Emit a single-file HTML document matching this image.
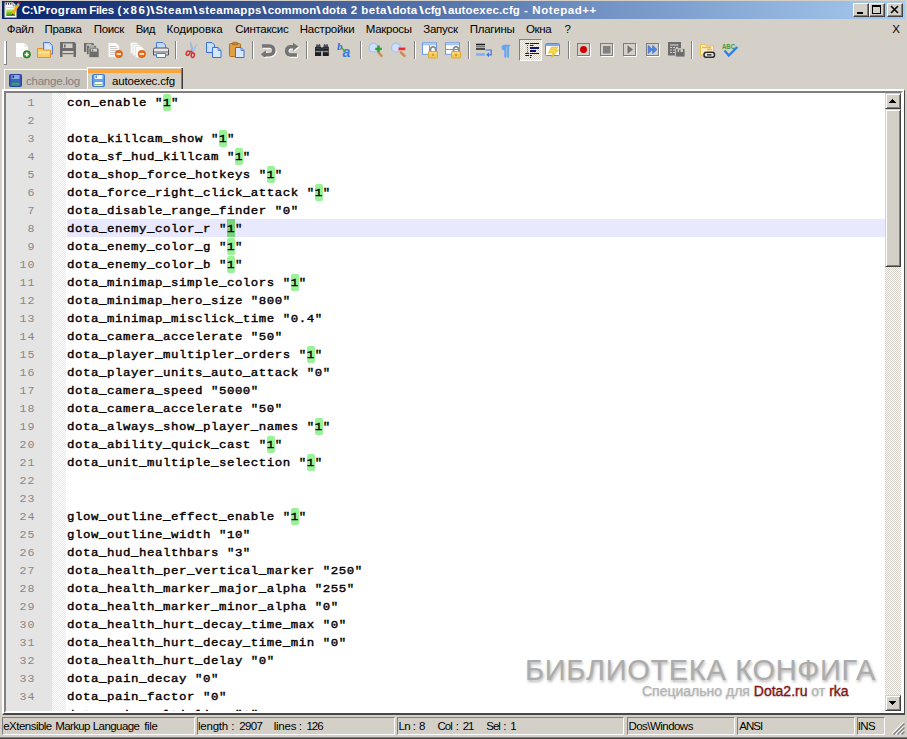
<!DOCTYPE html>
<html><head><meta charset="utf-8"><title>autoexec.cfg - Notepad++</title>
<style>
*{box-sizing:border-box;margin:0;padding:0}
html,body{width:907px;height:739px;overflow:hidden;background:#d4d0c8;font-family:"Liberation Sans",sans-serif;}
body{position:relative}
.abs{position:absolute}
#title{position:absolute;left:2px;top:1px;width:903px;height:18px;background:linear-gradient(90deg,#0a246a 0%,#a6caf0 100%);}
#title .t{position:absolute;left:0;top:2px;font-weight:bold;font-size:11.5px;line-height:14px;color:#fff;white-space:pre}
.sg{position:absolute;top:0;white-space:pre}
.wb{position:absolute;top:2px;width:16px;height:14px;background:#d4d0c8;border:1px solid;border-color:#fff #404040 #404040 #fff;box-shadow:inset -1px -1px 0 #808080;}
#menu{position:absolute;left:0;top:20px;width:907px;height:19px;font-size:11.5px;line-height:19px;color:#000}
.mi{position:absolute;top:0;white-space:pre}
#tb{position:absolute;left:0;top:39px;width:907px;height:28px}
.grip{position:absolute;left:4px;top:41px;width:3px;height:24px;background:#fff;border-right:1px solid #808080;border-bottom:1px solid #808080}
.sep{position:absolute;top:41px;width:2px;height:18px;border-left:1px solid #808080;border-right:1px solid #fff}
.ic{position:absolute;top:42px;width:16px;height:16px;overflow:visible}
.pressed{position:absolute;top:39px;width:23px;height:22px;border:1px solid;border-color:#808080 #fff #fff #808080;background:repeating-conic-gradient(#fff 0 25%,#d4d0c8 0 50%) 0 0/2px 2px}
#tab1{position:absolute;left:4px;top:69px;width:83px;height:20px;background:#cac6be;border-left:1px solid #fff;border-top:1px solid #fff;}
#tab2{position:absolute;left:87px;top:67px;width:96px;height:22px;background:#d4d0c8;border-left:1px solid #fff;border-top:1px solid #fff}
#tab2:before{content:"";position:absolute;left:0;top:1px;right:2px;height:4px;background:#faa53c}
#tab2:after{content:"";position:absolute;right:0;top:0;bottom:0;width:2px;background:linear-gradient(90deg,#808080 50%,#404040 50%)}
#tabtx{position:absolute;left:0;top:74px;font-size:11.5px;line-height:14px;color:#000}
#edo{position:absolute;left:2px;top:89px;width:903px;height:626px;border:solid;border-width:2px 1px 2px 2px;border-color:#fff #484848 #484848 #fff}
#edo:after{content:"";position:absolute;right:0;top:0;bottom:0;width:1px;background:#fff}
#ed{position:absolute;left:4px;top:91px;width:899px;height:622px;background:#fff;border:2px solid;border-color:#808080 #fff #fff #808080;overflow:hidden}
#ed:before{content:"";position:absolute;left:-1px;top:-1px;right:-1px;bottom:-1px;border:1px solid;border-color:#404040 #d4d0c8 #d4d0c8 #404040;z-index:5;pointer-events:none}
#edin{position:absolute;left:0;top:0;width:895px;height:618px;overflow:hidden;background:#fff}
#nm{position:absolute;left:0;top:0;width:46px;height:100%;background:#e4e4e4}
#fm{position:absolute;left:46px;top:0;width:14px;height:100%;background:repeating-conic-gradient(#fff 0 25%,#e9e9e9 0 50%) 0 0/2px 2px}
.ln{position:relative;height:18px;width:879px;white-space:pre}
.no{position:absolute;left:0;top:2px;width:29.6px;text-align:right;font:11.6px/16px "Liberation Mono",monospace;letter-spacing:1.04px;color:#878787}
.tx{position:absolute;left:61px;top:0;right:0;height:18px;padding-top:2px;font:normal 12.4px/16px "Liberation Mono",monospace;letter-spacing:0.5586px;color:#000;-webkit-text-stroke:0.42px #000;transform:scaleY(.89);transform-origin:0 13px}
.cl{position:absolute;left:61px;top:0;right:0;height:18px;background:#e8e8ff}
.hb{position:absolute;width:8px}
.hl{top:1px;height:17px;background:#98f298;border-radius:2px}
.sel{top:0;height:18px;background:#78d478}
#sb{position:absolute;left:879px;top:0;width:16px;height:100%;background:repeating-conic-gradient(#fff 0 25%,#d4d0c8 0 50%) 0 0/2px 2px}
.btn{position:absolute;left:0;width:16px;background:#d4d0c8;border:1px solid;border-color:#d4d0c8 #404040 #404040 #d4d0c8;box-shadow:inset 1px 1px 0 #fff, inset -1px -1px 0 #808080}
.arr{position:absolute;left:3px;width:0;height:0;border-left:4px solid transparent;border-right:4px solid transparent}
#status{position:absolute;left:0;top:717px;width:907px;height:18px}
#stx{position:absolute;left:0;top:0;font-size:11.5px;line-height:18px;color:#000}
.sf{position:absolute;top:0;height:18px;border:1px solid;border-color:#808080 #fff #fff #808080}
#wm1{position:absolute;left:519px;top:559px;font-size:29px;line-height:36px;color:#acacac;white-space:pre;text-shadow:1px 2px 3px rgba(0,0,0,.3);letter-spacing:0.68px}
#wm2{position:absolute;left:636px;top:590px;font-size:14px;line-height:16px;color:#b4b4b4;white-space:pre;text-shadow:0 1px 2px rgba(0,0,0,.22);-webkit-text-stroke:.2px #b4b4b4}
#wm2 b{font-weight:normal;color:#7e1414;-webkit-text-stroke:.3px #7e1414}
</style></head><body>
<div id="title">
<svg class="abs" style="left:1px;top:0px" width="19" height="18" viewBox="0 0 19 18"><defs><linearGradient id="gg" x1="0" y1="0" x2="0" y2="1"><stop offset="0" stop-color="#d4f470"/><stop offset=".75" stop-color="#58b018"/><stop offset="1" stop-color="#1c6008"/></linearGradient></defs><path d="M1.800 1.600h8.200l3.300 3.300v11.600h-11.500z" fill="#fff" stroke="#a0a0a0" stroke-width="1"/><path d="M10 1.600v3.300h3.300" fill="#f0f0f0" stroke="#707070" stroke-width=".9"/><rect x="3.300" y="8.200" width="8.600" height="6.600" fill="url(#gg)"/><path d="M3.300 6.300h8.600" stroke="#c8ccd0" stroke-width="1"/><path d="M3.200 2v1.700M5.500 2v1.700M7.700 2v1.700" stroke="#283060" stroke-width="1.200"/><path d="M15.600 3.200L9 13.500" stroke="#f8b008" stroke-width="2.600"/><path d="M9.700 12.300L8.200 14.600l2.500-.9z" fill="#403010"/><path d="M15 3.800l1-1.500" stroke="#a8c0e0" stroke-width="2"/><rect x="15.500" y=".800" width="2" height="2" fill="#c81010"/></svg>
<div class="t" id="tt"><span class="sg" style="left:19.85px;letter-spacing:-0.400px">C:</span><span class="sg" style="left:31.20px;letter-spacing:0.000px;transform-origin:0.10px 50%;transform:scaleX(1.467)">\</span><span class="sg" style="left:35.75px;letter-spacing:0.308px">Program</span> <span class="sg" style="left:87.25px;letter-spacing:-0.350px">Files</span> <span class="sg" style="left:115.45px;letter-spacing:1.462px">(x86)</span><span class="sg" style="left:148.20px;letter-spacing:0.000px;transform-origin:0.10px 50%;transform:scaleX(1.467)">\</span><span class="sg" style="left:153.40px;letter-spacing:0.563px">Steam</span><span class="sg" style="left:191.20px;letter-spacing:0.000px;transform-origin:0.10px 50%;transform:scaleX(1.467)">\</span><span class="sg" style="left:196.50px;letter-spacing:0.356px">steamapps</span><span class="sg" style="left:259.90px;letter-spacing:0.000px;transform-origin:0.10px 50%;transform:scaleX(1.500)">\</span><span class="sg" style="left:265.70px;letter-spacing:0.110px">common</span><span class="sg" style="left:314.40px;letter-spacing:0.000px;transform-origin:0.10px 50%;transform:scaleX(1.500)">\</span><span class="sg" style="left:319.95px;letter-spacing:0.117px">dota</span> <span class="sg" style="left:348.65px;letter-spacing:0.000px">2</span> <span class="sg" style="left:359.25px;letter-spacing:0.500px">beta</span><span class="sg" style="left:385.40px;letter-spacing:0.000px;transform-origin:0.10px 50%;transform:scaleX(1.500)">\</span><span class="sg" style="left:390.45px;letter-spacing:0.117px">dota</span><span class="sg" style="left:416.70px;letter-spacing:0.000px;transform-origin:0.10px 50%;transform:scaleX(1.533)">\</span><span class="sg" style="left:422.50px;letter-spacing:-0.225px">cfg</span><span class="sg" style="left:439.90px;letter-spacing:0.000px;transform-origin:0.10px 50%;transform:scaleX(1.500)">\</span><span class="sg" style="left:445.90px;letter-spacing:0.155px">autoexec.cfg</span> <span class="sg" style="left:521.90px;letter-spacing:0.000px">-</span> <span class="sg" style="left:530.35px;letter-spacing:0.562px">Notepad++</span></div>
<div class="wb" style="left:851px"><i class="abs" style="left:3px;top:8px;width:6px;height:2px;background:#000"></i></div>
<div class="wb" style="left:867px"><i class="abs" style="left:2px;top:1px;width:9px;height:9px;border:1px solid #000;border-top-width:2px"></i></div>
<div class="wb" style="left:885px"><svg class="abs" style="left:2px;top:1px" width="10" height="9" viewBox="0 0 10 9"><path d="M1 1l7 7M8 1L1 8" stroke="#000" stroke-width="1.6"/></svg></div>
</div>
<div id="menu"><span class="mi" style="left:6.75px;letter-spacing:-0.350px">Файл</span> <span class="mi" style="left:44.40px;letter-spacing:-0.250px">Правка</span> <span class="mi" style="left:93.80px;letter-spacing:-0.363px">Поиск</span> <span class="mi" style="left:135.80px;letter-spacing:-0.625px">Вид</span> <span class="mi" style="left:166.50px;letter-spacing:-0.056px">Кодировка</span> <span class="mi" style="left:235.25px;letter-spacing:-0.281px">Синтаксис</span> <span class="mi" style="left:299.70px;letter-spacing:-0.188px">Настройки</span> <span class="mi" style="left:365.80px;letter-spacing:-0.283px">Макросы</span> <span class="mi" style="left:423.15px;letter-spacing:-0.200px">Запуск</span> <span class="mi" style="left:469.70px;letter-spacing:-0.242px">Плагины</span> <span class="mi" style="left:526.00px;letter-spacing:-0.350px">Окна</span> <span class="mi" style="left:564.45px;letter-spacing:0.000px">?</span> <span class="mi" style="left:892.25px;letter-spacing:0.000px">X</span></div>
<div class="grip"></div>
<svg class="ic" style="left:15px" width="16" height="16" viewBox="0 0 16 16"><path d="M1 1h8.500l3.500 3.500v10.500h-12z" fill="#fefefe"/><path d="M9.500 1v3.500h3.500" fill="#f0f0f0" stroke="#e4e4e4" stroke-width=".5"/><circle cx="11.800" cy="12.400" r="3.800" fill="#3a9a30"/><circle cx="11.800" cy="12.400" r="3.500" fill="none" stroke="#1e6a1a" stroke-width=".8"/><path d="M9.600 12.400h4.400M11.800 10.200v4.400" stroke="#fff" stroke-width="1.500"/></svg>
<svg class="ic" style="left:37px" width="16" height="16" viewBox="0 0 16 16"><path d="M6.5 .5h6l3 3v8.500h-9z" fill="#bcd4f8" stroke="#4a80d8" stroke-width="1"/><path d="M8 2h4v2h2v6h-6z" fill="#dce8fc"/><path d="M.5 6.500h5l1 1.500h7v7.500h-13z" fill="#f8cf6a" stroke="#e8902a" stroke-width="1"/><path d="M1.500 9.500h11v2h-11z" fill="#fbe39a"/></svg>
<svg class="ic" style="left:60px" width="16" height="16" viewBox="0 0 16 16"><path d="M0 0h14.500l1.500 1.500v13.500h-16z" fill="#6c6c6c"/><rect x="3" y="1.500" width="9.500" height="4.500" fill="#d4d0c8"/><rect x="4" y="2.500" width="1.600" height="3" fill="#6c6c6c"/><rect x="2.500" y="9" width="11" height="6" fill="#d4d0c8"/><rect x="2.500" y="11" width="11" height="1.200" fill="#6c6c6c"/></svg>
<svg class="ic" style="left:83px" width="16" height="16" viewBox="0 0 16 16"><path d="M1 1h9v3h-9z M1 1h9l1 1v8h-10z" fill="#6c6c6c"/><path d="M3.500 3.500h9l1 1v8h-10z" fill="#6c6c6c" stroke="#d4d0c8" stroke-width=".7"/><path d="M6 6h9l1 1v8.500h-10z" fill="#6c6c6c" stroke="#d4d0c8" stroke-width=".7"/><rect x="3.500" y="1.800" width="5" height="1" fill="#d4d0c8"/><rect x="6" y="4.300" width="5" height="1" fill="#d4d0c8"/><rect x="8" y="7" width="6" height="2.600" fill="#d4d0c8"/><rect x="9" y="7.600" width="1.200" height="2" fill="#6c6c6c"/></svg>
<svg class="ic" style="left:107px" width="16" height="16" viewBox="0 0 16 16"><path d="M1.500 1h7.500l3 3v11h-10.500z" fill="#fcfcfc" stroke="#e4e2dc" stroke-width=".6"/><path d="M3 4.500h6M3 6.500h7.500M3 8.500h7.500M3 10.500h5M3 12.500h4" stroke="#c8c8c8" stroke-width="1"/><circle cx="11.800" cy="12" r="3.700" fill="#ee6a10"/><circle cx="11.800" cy="12" r="3.700" fill="none" stroke="#c8500a" stroke-width=".6"/><path d="M9.600 12h4.400" stroke="#fff" stroke-width="1.600"/></svg>
<svg class="ic" style="left:130px" width="16" height="16" viewBox="0 0 16 16"><path d="M.500 .500h6l2 2v9h-8z" fill="#fafafa" stroke="#dcdad4" stroke-width=".6"/><path d="M3 2.500h6l2 2v9h-8z" fill="#fafafa" stroke="#dcdad4" stroke-width=".6"/><path d="M5.500 4.500h6l2.500 2.500v8.500h-8.500z" fill="#fcfcfc" stroke="#dcdad4" stroke-width=".6"/><circle cx="11.800" cy="12" r="3.700" fill="#ee6a10"/><circle cx="11.800" cy="12" r="3.700" fill="none" stroke="#c8500a" stroke-width=".6"/><path d="M9.600 12h4.400" stroke="#fff" stroke-width="1.600"/></svg>
<svg class="ic" style="left:153px" width="16" height="16" viewBox="0 0 16 16"><path d="M3.500 .500h6.500l2.500 2.500v5h-9z" fill="#c4daf8" stroke="#4a80d8" stroke-width="1"/><path d="M.500 7.500q0-1.500 1.500-1.500h12q1.500 0 1.500 1.500v5.500h-15z" fill="#e8e8e8" stroke="#505458" stroke-width="1"/><rect x="1" y="9" width="14" height="2.200" fill="#a0a4a8"/><path d="M3.500 11.500h9v4h-9z" fill="#f4f8ff" stroke="#4a80d8" stroke-width="1"/></svg>
<div class="sep" style="left:175px"></div>
<svg class="ic" style="left:183px" width="16" height="16" viewBox="0 0 16 16"><path d="M7.600 .500L8.800 10.500L9.600 6z" fill="#a8ccf0" stroke="#88b0e0" stroke-width=".8"/><path d="M13.600 2.500L8.300 11L10.800 9z" fill="#cfe4fa" stroke="#90b8e4" stroke-width=".8"/><ellipse cx="5" cy="11.200" rx="1.700" ry="2.300" fill="none" stroke="#d83030" stroke-width="1.500" transform="rotate(40 5 11.200)"/><ellipse cx="9.800" cy="13.200" rx="1.600" ry="2.300" fill="none" stroke="#d83030" stroke-width="1.500" transform="rotate(10 9.800 13.200)"/><path d="M6.500 9.800L8.500 9.300L9.500 10.800" stroke="#d83030" stroke-width="1.300" fill="none"/></svg>
<svg class="ic" style="left:206px" width="16" height="16" viewBox="0 0 16 16"><path d="M.500 .500h5.500l2.500 2.500v7.500h-8z" fill="#c8dcf8" stroke="#3a70d0" stroke-width="1"/><path d="M6.500 5.500h5.500l3 3v7h-8.500z" fill="#d8e6fc" stroke="#3a70d0" stroke-width="1"/><path d="M12 5.500v3h3" fill="none" stroke="#3a70d0" stroke-width=".8"/></svg>
<svg class="ic" style="left:229px" width="16" height="16" viewBox="0 0 16 16"><rect x=".500" y="1.500" width="11" height="13" rx="1" fill="#e0a048" stroke="#b07020" stroke-width="1"/><rect x="3.500" y=".300" width="5" height="2.500" rx=".8" fill="#c88830" stroke="#905810" stroke-width=".6"/><path d="M6.500 5.500h5.500l3 3v7h-8.500z" fill="#d8e6fc" stroke="#3a70d0" stroke-width="1"/><path d="M12 5.500v3h3" fill="none" stroke="#3a70d0" stroke-width=".8"/></svg>
<div class="sep" style="left:252px"></div>
<svg class="ic" style="left:260px" width="16" height="16" viewBox="0 0 16 16"><g transform="translate(1 1)"><path d="M2 4H9.500A4.200 4.200 0 0 1 9.500 12.700H5" fill="none" stroke="#fff" stroke-width="3.600"/><path d="M6 8.300L.800 12.300L4.200 15.200L6 14.500z" fill="#fff"/></g><path d="M2 4H9.500A4.200 4.200 0 0 1 9.500 12.700H5" fill="none" stroke="#747474" stroke-width="3.600"/><path d="M6 8.300L.800 12.300L4.200 15.200L6 14.500z" fill="#747474"/></svg>
<svg class="ic" style="left:283px" width="16" height="16" viewBox="0 0 16 16"><g transform="translate(1 1)"><path d="M14 13H7A4.200 4.200 0 0 1 7 4.800H10.500" fill="none" stroke="#fff" stroke-width="3.600"/><path d="M10 .800L15.500 4.600L10 8.800z" fill="#fff"/></g><path d="M14 13H7A4.200 4.200 0 0 1 7 4.800H10.500" fill="none" stroke="#747474" stroke-width="3.600"/><path d="M10 .800L15.500 4.600L10 8.800z" fill="#747474"/></svg>
<div class="sep" style="left:306px"></div>
<svg class="ic" style="left:314px" width="16" height="16" viewBox="0 0 16 16"><path d="M2.500 2h3.500l.800 3h-5zM10 2h3.500l1 3h-5.200z" fill="#4a4e54"/><path d="M1 5h6.200v9h-6.200zM8.800 5h6v9h-6z" fill="#1c1e22"/><rect x="6.500" y="5.500" width="3" height="3.500" fill="#2c3036"/><path d="M1.500 9.500h5.200M9.300 9.500h5" stroke="#8a8e94" stroke-width="1.600"/><path d="M3.300 2.600h1.800M10.800 2.600h1.800" stroke="#b0b4b8" stroke-width="1"/><path d="M1.500 6.200h5M9.300 6.200h5" stroke="#50545a" stroke-width="1"/></svg>
<svg class="ic" style="left:337px" width="16" height="16" viewBox="0 0 16 16"><text x="0" y="7.500" font-family="Liberation Serif,serif" font-style="italic" font-weight="bold" font-size="11" fill="#2a6ae0">b</text><text x="5.500" y="15.300" font-family="Liberation Sans,sans-serif" font-style="italic" font-weight="bold" font-size="14" fill="#3a7ae8">a</text><path d="M4.500 6l3.500 3" stroke="#3aa83a" stroke-width="1.400" fill="none"/><path d="M8.800 6.800v3.200h-3.200z" fill="#3aa83a"/></svg>
<div class="sep" style="left:360px"></div>
<svg class="ic" style="left:368px" width="16" height="16" viewBox="0 0 16 16"><path d="M10.500 10.500l3 3.300" stroke="#c89058" stroke-width="2.600" stroke-linecap="round"/><circle cx="5.400" cy="5.700" r="4.400" fill="#d0e0f8" stroke="#a8c4ec" stroke-width="1.400"/><path d="M7.200 6.900h6.600M10.500 3.600v6.600" stroke="#2ea02e" stroke-width="2.400"/></svg>
<svg class="ic" style="left:391px" width="16" height="16" viewBox="0 0 16 16"><path d="M10 10.500l3.500 3.300" stroke="#c89058" stroke-width="2.600" stroke-linecap="round"/><circle cx="4.900" cy="5.700" r="4.400" fill="#d0e0f8" stroke="#a8c4ec" stroke-width="1.400"/><rect x="7.600" y="5.600" width="6.600" height="2.500" fill="#e82828" stroke="#f08080" stroke-width=".5"/></svg>
<div class="sep" style="left:414px"></div>
<svg class="ic" style="left:422px" width="16" height="16" viewBox="0 0 16 16"><rect x=".500" y=".800" width="14" height="11.500" fill="#fff" stroke="#6a98e4" stroke-width="1"/><rect x="1" y="1.300" width="13" height="2" fill="#a4c4f4"/><path d="M7.500 3.300v9" stroke="#6a98e4" stroke-width="1"/><path d="M8.500 9.500v-2a2.600 2.600 0 0 1 5.200 0v2" fill="none" stroke="#8c8c8c" stroke-width="1.800"/><rect x="6.500" y="9.500" width="9" height="6.500" rx=".6" fill="#f4c850" stroke="#d8a020" stroke-width=".8"/><rect x="7.500" y="10.500" width="7" height="1.500" fill="#fbe08c"/><rect x="10.300" y="11.500" width="1.500" height="2.500" fill="#c89020"/></svg>
<svg class="ic" style="left:445px" width="16" height="16" viewBox="0 0 16 16"><rect x=".500" y=".800" width="14" height="11.500" fill="#fff" stroke="#6a98e4" stroke-width="1"/><rect x="1" y="1.300" width="13" height="2" fill="#a4c4f4"/><path d="M.500 7.500h14" stroke="#6a98e4" stroke-width="1"/><path d="M8.500 9.500v-2a2.600 2.600 0 0 1 5.200 0v2" fill="none" stroke="#8c8c8c" stroke-width="1.800"/><rect x="6.500" y="9.500" width="9" height="6.500" rx=".6" fill="#f4c850" stroke="#d8a020" stroke-width=".8"/><rect x="7.500" y="10.500" width="7" height="1.500" fill="#fbe08c"/><rect x="10.300" y="11.500" width="1.500" height="2.500" fill="#c89020"/></svg>
<div class="sep" style="left:468px"></div>
<svg class="ic" style="left:476px" width="16" height="16" viewBox="0 0 16 16"><path d="M0 2.500h9M0 7h9" stroke="#181818" stroke-width="1.300"/><path d="M0 4.700h9" stroke="#707070" stroke-width="1.300"/><rect x="0" y="11.300" width="9" height="2.400" fill="#7ab0f0"/><path d="M9.500 8h5.700v4.800h-3" stroke="#3a78e0" stroke-width="1.200" fill="none"/><path d="M13 10.300l-2.800 2.500l2.800 2.500z" fill="#3a78e0"/></svg>
<svg class="ic" style="left:499px" width="16" height="16" viewBox="0 0 16 16"><text x="2.200" y="12.500" font-family="Liberation Sans,sans-serif" font-weight="bold" font-size="15.500" fill="#62a4f2" stroke="#62a4f2" stroke-width=".7">¶</text></svg>
<div class="pressed" style="left:519px"></div>
<svg class="ic" style="left:522px" width="16" height="16" viewBox="0 0 16 16"><path d="M3.200 1.500h3.800M8 1.500h9M8 3.500h3.500M3.200 11.500h3.800M8 11.500h9M3.200 13.500h3.800M8 13.500h2M8 15.500h1.200" stroke="#0c1470" stroke-width="1.200"/><path d="M8 6h9M8 9h6" stroke="#0c1470" stroke-width="2"/><path d="M5.500 3v7.500" stroke="#f01010" stroke-width="1.200" stroke-dasharray="1.100 1"/></svg>
<svg class="ic" style="left:545px" width="16" height="16" viewBox="0 0 16 16"><rect x=".500" y="1.500" width="14" height="12" rx="1" fill="#fff" stroke="#5a8ae0" stroke-width="1"/><rect x="1" y="2" width="13" height="2" fill="#7aa8ec"/><path d="M6.500 5h6.500l-2.500 3h3l-7 7.500l1.500-4.500h-4.500z" fill="#f4d850" stroke="#e0b830" stroke-width=".7"/></svg>
<div class="sep" style="left:568px"></div>
<svg class="ic" style="left:576px" width="16" height="16" viewBox="0 0 16 16"><path d="M2 14.500h12.500v-12.500" stroke="#fff" stroke-width="1" fill="none"/><rect x="1.500" y="1.500" width="12" height="12" fill="#d4d0c8" stroke="#7c7c7c" stroke-width="1"/><circle cx="7.500" cy="7.500" r="3.500" fill="#cc0000"/></svg>
<svg class="ic" style="left:599px" width="16" height="16" viewBox="0 0 16 16"><path d="M2 14.500h12.500v-12.500" stroke="#fff" stroke-width="1" fill="none"/><rect x="1.500" y="1.500" width="12" height="12" fill="#d4d0c8" stroke="#7c7c7c" stroke-width="1"/><rect x="4" y="4" width="7.500" height="7.500" fill="#808080"/></svg>
<svg class="ic" style="left:622px" width="16" height="16" viewBox="0 0 16 16"><path d="M2 14.500h12.500v-12.500" stroke="#fff" stroke-width="1" fill="none"/><rect x="1.500" y="1.500" width="12" height="12" fill="#d4d0c8" stroke="#7c7c7c" stroke-width="1"/><path d="M5.500 3.200v8.600l5.500-4.300z" fill="#727272"/></svg>
<svg class="ic" style="left:645px" width="16" height="16" viewBox="0 0 16 16"><path d="M2 14.500h12.500v-12.500" stroke="#fff" stroke-width="1" fill="none"/><rect x="1.500" y="1.500" width="12" height="12" fill="#d4d0c8" stroke="#7c7c7c" stroke-width="1"/><path d="M3.300 3.500v8l4.200-4zM7.700 3.500v8l4.300-4z" fill="#4a88f0" stroke="#2a60d0" stroke-width=".6"/></svg>
<svg class="ic" style="left:668px" width="16" height="16" viewBox="0 0 16 16"><path d="M0 0h13v13.500h-13z" fill="#6c6c6c"/><path d="M2 3h8.500" stroke="#d4d0c8" stroke-width="1.200"/><path d="M2 5.500h2M5 5.500h2M2 8h2M5 8h2M2 10.500h2M5 10.500h2M8 5.500h2" stroke="#d4d0c8" stroke-width="1.200"/><path d="M7.500 6.500h8.500l1 1v7.500h-9.500z" fill="#6c6c6c" stroke="#d4d0c8" stroke-width=".8"/><rect x="9.500" y="7.300" width="5.500" height="2.600" fill="#d4d0c8"/><rect x="11" y="8" width="1.500" height="1.900" fill="#6c6c6c"/></svg>
<div class="sep" style="left:691px"></div>
<svg class="ic" style="left:699px" width="16" height="16" viewBox="0 0 16 16"><path d="M1.500 2.500h5l1 1.500h7v9h-13z" fill="#fdeec8" stroke="#ecc040" stroke-width="1"/><path d="M3 5.500h9M8 7.500h5" stroke="#f8b050" stroke-width="1.400"/><rect x="5" y="10.300" width="10.500" height="5" rx="2.400" fill="#e4e4e4" stroke="#2c2c2c" stroke-width="1.500"/><rect x="8" y="12" width="4.500" height="1.600" fill="#484848"/></svg>
<svg class="ic" style="left:722px" width="16" height="16" viewBox="0 0 16 16"><text x="0" y="6.800" font-family="Liberation Sans,sans-serif" font-weight="bold" font-size="6.500" fill="#3a9a40" textLength="13" lengthAdjust="spacingAndGlyphs">ABC</text><path d="M2.500 8.500l4.300 5l8.500-8.500" stroke="#2a80e8" stroke-width="2.300" fill="none"/></svg>
<div id="tab1"><svg class="abs" style="left:4px;top:4px" width="13" height="13" viewBox="0 0 13 13"><rect x=".500" y=".500" width="12" height="12" rx="1" fill="#3058b4" stroke="#24469c"/><rect x="2.500" y="1" width="8" height="4" fill="#8ea8e4"/><rect x="3.500" y="1.500" width="1.500" height="2.500" fill="#1c3478"/><rect x="2.500" y="5.500" width="8" height="2" fill="#4068c0"/><rect x="2.500" y="8.500" width="8" height="3" fill="#3c9c74"/></svg></div>
<div id="tab2"><svg class="abs" style="left:4px;top:6px" width="13" height="13" viewBox="0 0 13 13"><rect x=".500" y=".500" width="12" height="12" rx="1" fill="#5c9ae4" stroke="#3c78cc"/><rect x="2.500" y="1" width="8" height="4" fill="#eef4fc"/><rect x="3.500" y="1.500" width="1.500" height="2.500" fill="#5c8cd8"/><rect x="2.500" y="5.500" width="8" height="2" fill="#6ca6ec"/><rect x="2.500" y="8" width="8" height="4" fill="#f6faf0"/><rect x="3" y="10" width="7" height="1.200" fill="#8cc460"/></svg></div>
<div id="tabtx"><span class="sg" style="left:26.05px;letter-spacing:-0.250px;color:#808080">change.log</span> <span class="sg" style="left:112.05px;letter-spacing:-0.195px">autoexec.cfg</span></div>
<div id="edo"></div><div id="ed"><div id="edin">
<div id="nm"></div><div id="fm"></div>
<div class="ln"><span class="no">1</span><i class="hb hl" style="left:157px"></i><span class="tx">con_enable &quot;1&quot;</span></div>
<div class="ln"><span class="no">2</span><span class="tx"></span></div>
<div class="ln"><span class="no">3</span><i class="hb hl" style="left:213px"></i><span class="tx">dota_killcam_show &quot;1&quot;</span></div>
<div class="ln"><span class="no">4</span><i class="hb hl" style="left:229px"></i><span class="tx">dota_sf_hud_killcam &quot;1&quot;</span></div>
<div class="ln"><span class="no">5</span><i class="hb hl" style="left:261px"></i><span class="tx">dota_shop_force_hotkeys &quot;1&quot;</span></div>
<div class="ln"><span class="no">6</span><i class="hb hl" style="left:309px"></i><span class="tx">dota_force_right_click_attack &quot;1&quot;</span></div>
<div class="ln"><span class="no">7</span><span class="tx">dota_disable_range_finder &quot;0&quot;</span></div>
<div class="ln"><span class="no">8</span><i class="cl"></i><i class="hb sel" style="left:221px"></i><span class="tx">dota_enemy_color_r &quot;1&quot;</span></div>
<div class="ln"><span class="no">9</span><i class="hb hl" style="left:221px"></i><span class="tx">dota_enemy_color_g &quot;1&quot;</span></div>
<div class="ln"><span class="no">10</span><i class="hb hl" style="left:221px"></i><span class="tx">dota_enemy_color_b &quot;1&quot;</span></div>
<div class="ln"><span class="no">11</span><i class="hb hl" style="left:285px"></i><span class="tx">dota_minimap_simple_colors &quot;1&quot;</span></div>
<div class="ln"><span class="no">12</span><span class="tx">dota_minimap_hero_size &quot;800&quot;</span></div>
<div class="ln"><span class="no">13</span><span class="tx">dota_minimap_misclick_time &quot;0.4&quot;</span></div>
<div class="ln"><span class="no">14</span><span class="tx">dota_camera_accelerate &quot;50&quot;</span></div>
<div class="ln"><span class="no">15</span><i class="hb hl" style="left:301px"></i><span class="tx">dota_player_multipler_orders &quot;1&quot;</span></div>
<div class="ln"><span class="no">16</span><span class="tx">dota_player_units_auto_attack &quot;0&quot;</span></div>
<div class="ln"><span class="no">17</span><span class="tx">dota_camera_speed &quot;5000&quot;</span></div>
<div class="ln"><span class="no">18</span><span class="tx">dota_camera_accelerate &quot;50&quot;</span></div>
<div class="ln"><span class="no">19</span><i class="hb hl" style="left:309px"></i><span class="tx">dota_always_show_player_names &quot;1&quot;</span></div>
<div class="ln"><span class="no">20</span><i class="hb hl" style="left:261px"></i><span class="tx">dota_ability_quick_cast &quot;1&quot;</span></div>
<div class="ln"><span class="no">21</span><i class="hb hl" style="left:301px"></i><span class="tx">dota_unit_multiple_selection &quot;1&quot;</span></div>
<div class="ln"><span class="no">22</span><span class="tx"></span></div>
<div class="ln"><span class="no">23</span><span class="tx"></span></div>
<div class="ln"><span class="no">24</span><i class="hb hl" style="left:285px"></i><span class="tx">glow_outline_effect_enable &quot;1&quot;</span></div>
<div class="ln"><span class="no">25</span><span class="tx">glow_outline_width &quot;10&quot;</span></div>
<div class="ln"><span class="no">26</span><span class="tx">dota_hud_healthbars &quot;3&quot;</span></div>
<div class="ln"><span class="no">27</span><span class="tx">dota_health_per_vertical_marker &quot;250&quot;</span></div>
<div class="ln"><span class="no">28</span><span class="tx">dota_health_marker_major_alpha &quot;255&quot;</span></div>
<div class="ln"><span class="no">29</span><span class="tx">dota_health_marker_minor_alpha &quot;0&quot;</span></div>
<div class="ln"><span class="no">30</span><span class="tx">dota_health_hurt_decay_time_max &quot;0&quot;</span></div>
<div class="ln"><span class="no">31</span><span class="tx">dota_health_hurt_decay_time_min &quot;0&quot;</span></div>
<div class="ln"><span class="no">32</span><span class="tx">dota_health_hurt_delay &quot;0&quot;</span></div>
<div class="ln"><span class="no">33</span><span class="tx">dota_pain_decay &quot;0&quot;</span></div>
<div class="ln"><span class="no">34</span><span class="tx">dota_pain_factor &quot;0&quot;</span></div>
<div class="ln"><span class="no">35</span><span class="tx">dota_pain_multiplier &quot;0&quot;</span></div>
<div id="sb">
<div class="btn" style="top:0;height:16px"><svg class="abs" style="left:3px;top:5px" width="7" height="4" viewBox="0 0 7 4" shape-rendering="crispEdges"><path d="M3 0h1v1h1v1h1v1h1v1h-7v-1h1v-1h1v-1h1z" fill="#000"/></svg></div>
<div class="btn" style="top:16px;height:158px"></div>
<div class="btn" style="top:602px;height:16px"><svg class="abs" style="left:3px;top:5px" width="7" height="4" viewBox="0 0 7 4" shape-rendering="crispEdges"><path d="M0 0h7v1h-1v1h-1v1h-1v1h-1v-1h-1v-1h-1v-1h-1z" fill="#000"/></svg></div>
</div>
<div id="wm1">БИБЛИОТЕКА КОНФИГА</div>
<div id="wm2">Специально для <b>Dota2.ru</b> от <b>rka</b></div>
</div></div>
<div id="status">
<div class="sf" style="left:2px;width:193px"></div>
<div class="sf" style="left:197px;width:198px"></div>
<div class="sf" style="left:397px;width:227px"></div>
<div class="sf" style="left:627px;width:108px"></div>
<div class="sf" style="left:737px;width:118px"></div>
<div class="sf" style="left:857px;width:28px"></div>
<div id="stx"><span class="sg" style="left:3.25px;letter-spacing:-0.528px">eXtensible</span> <span class="sg" style="left:55.30px;letter-spacing:-0.640px">Markup</span> <span class="sg" style="left:92.80px;letter-spacing:-0.579px">Language</span> <span class="sg" style="left:144.15px;letter-spacing:-0.317px">file</span> <span class="sg" style="left:197.95px;letter-spacing:-0.210px">length</span> <span class="sg" style="left:231.35px;letter-spacing:0.000px">:</span> <span class="sg" style="left:239.35px;letter-spacing:-0.667px">2907</span>    <span class="sg" style="left:273.65px;letter-spacing:-0.200px">lines</span> <span class="sg" style="left:298.85px;letter-spacing:0.000px">:</span> <span class="sg" style="left:306.45px;letter-spacing:-1.000px">126</span> <span class="sg" style="left:398.60px;letter-spacing:-0.650px">Ln</span> <span class="sg" style="left:412.65px;letter-spacing:0.000px">:</span> <span class="sg" style="left:418.90px;letter-spacing:0.000px">8</span>    <span class="sg" style="left:437.55px;letter-spacing:-1.000px">Col</span> <span class="sg" style="left:455.75px;letter-spacing:0.000px">:</span> <span class="sg" style="left:462.65px;letter-spacing:-1.000px">21</span>    <span class="sg" style="left:486.30px;letter-spacing:-1.000px">Sel</span> <span class="sg" style="left:503.35px;letter-spacing:0.000px">:</span> <span class="sg" style="left:510.35px;letter-spacing:0.000px">1</span> <span class="sg" style="left:628.40px;letter-spacing:-0.530px">Dos\Windows</span> <span class="sg" style="left:739.30px;letter-spacing:-1.000px">ANSI</span> <span class="sg" style="left:857.75px;letter-spacing:-0.650px">INS</span></div>
<svg class="abs" style="left:892px;top:5px" width="13" height="13" viewBox="0 0 13 13"><path d="M12.500 .500L.500 12.500M12.500 4.500L4.500 12.500M12.500 8.500L8.500 12.500" stroke="#fff" stroke-width="1.200" transform="translate(-1 0)"/><path d="M12.500 1.500L1.500 12.500M12.500 5.500L5.500 12.500M12.500 9.500L9.500 12.500" stroke="#808080" stroke-width="1.500"/></svg>
</div>
<div class="abs" style="left:0;top:737px;width:907px;height:1px;background:#808080"></div>
<div class="abs" style="left:0;top:738px;width:907px;height:1px;background:#404040"></div>
</body></html>
